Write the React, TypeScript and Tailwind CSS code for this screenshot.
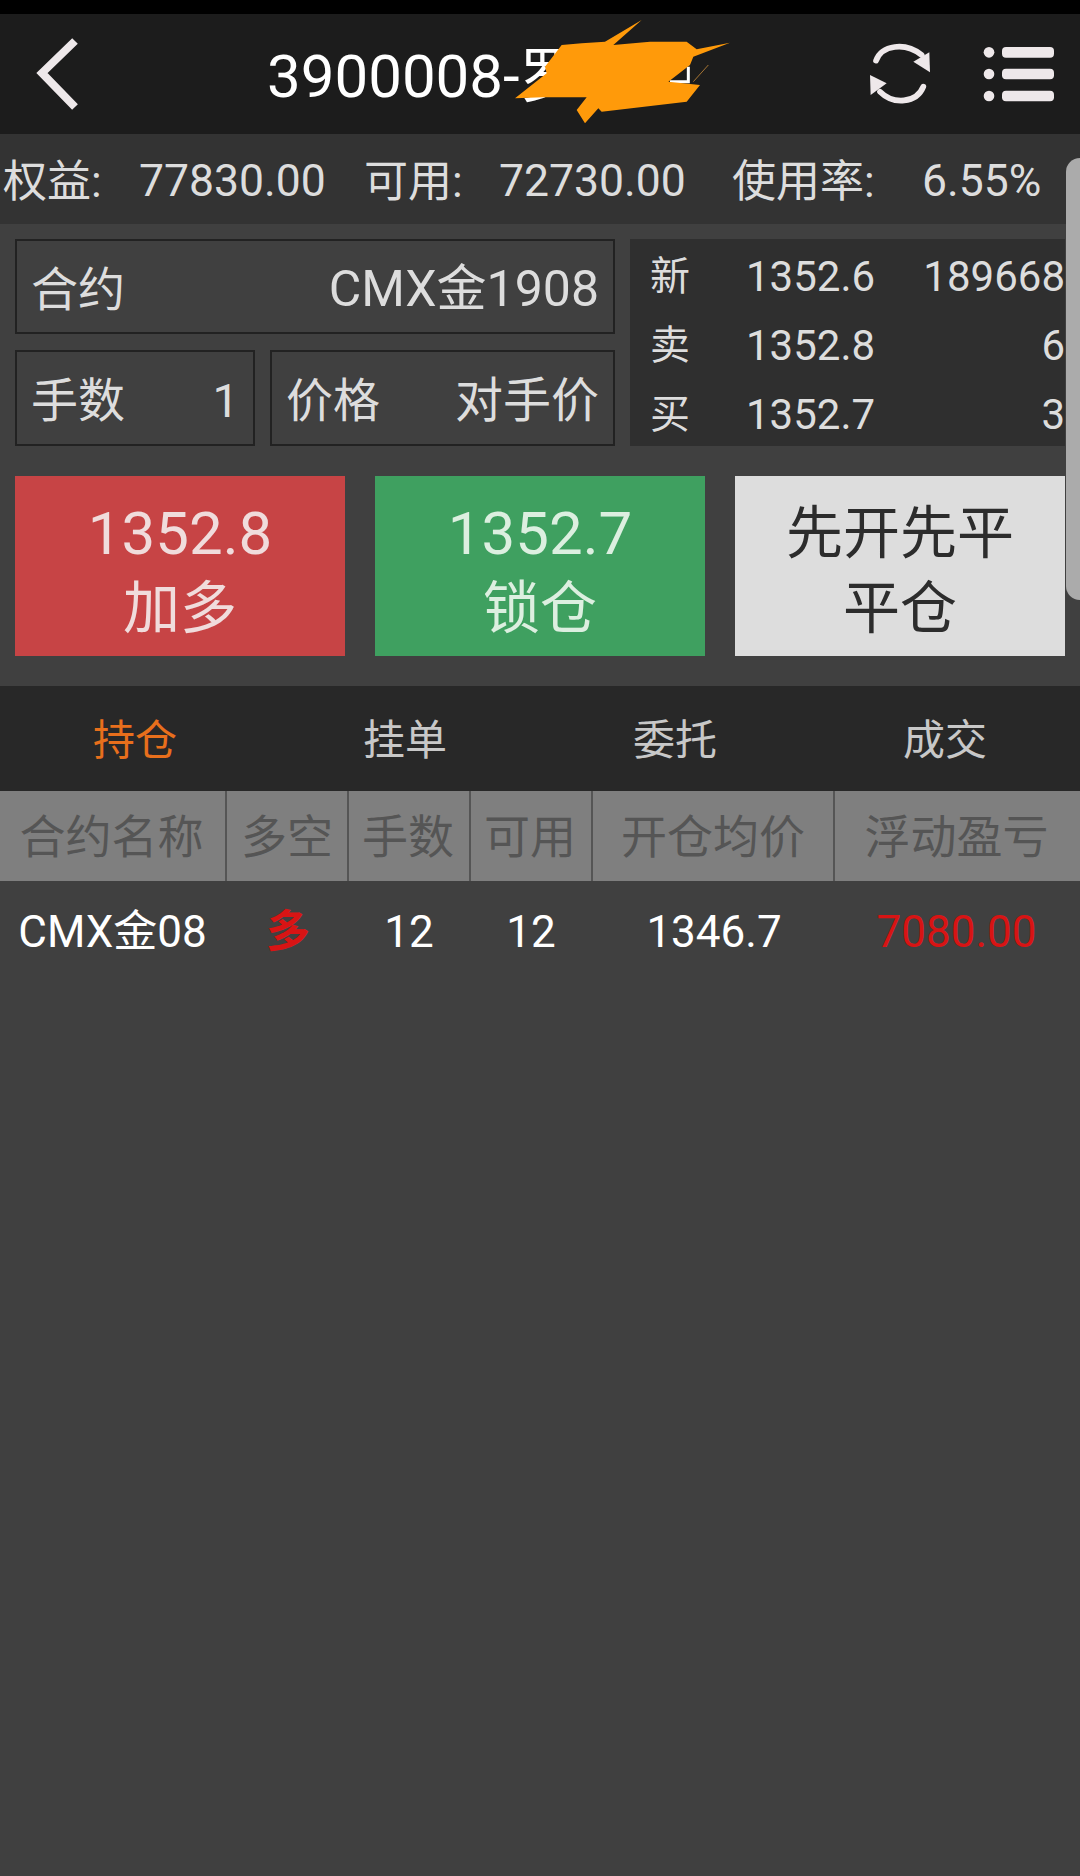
const font = { fontFamily: '"Roboto", "Noto Sans CJK SC", sans-serif' };

const quotes = [
  ["新", "1352.6", "189668"],
  ["卖", "1352.8", "6"],
  ["买", "1352.7", "3"],
];

const columns = [
  ["合约名称", "CMX金08", "w-[227px] pr-[2px]", "text-white"],
  ["多空", "多", "w-[122px]", "text-[#d81414] font-bold"],
  ["手数", "12", "w-[122px] pr-[2px]", "text-white"],
  ["可用", "12", "w-[122px] pr-[2px]", "text-white"],
  ["开仓均价", "1346.7", "w-[242px]", "text-white"],
  ["浮动盈亏", "7080.00", "w-[245px] pr-[2px]", "text-[#d81414]"],
];

function Header() {
  return (
    <header className="relative flex h-[120px] items-center bg-[#1c1c1c] pl-[36px] pr-[20px]">
      <svg width="44" height="72" viewBox="0 0 44 72" fill="none" className="shrink-0">
        <polyline points="39,3 6,35 39,69" stroke="#eee8ea" strokeWidth="8" />
      </svg>
      <h1 className="ml-[187px] pt-[5px] text-[60px] leading-none font-normal text-white">3900008-罗</h1>
      <svg
        width="780"
        height="375"
        viewBox="0 0 780 375"
        className="absolute left-[490px] top-[-4px] h-[125px] w-[260px]"
      >
        <path d="M540 215H595V170" stroke="#fff" strokeWidth="9" fill="none" />
        <line x1="610" y1="215" x2="655" y2="165" stroke="#e8a040" strokeWidth="2" />
        <polygon
          fill="#ff9a0a"
          points="455,30 345,95 275,100 215,105 165,170 170,190 75,265 160,262 290,262 260,300 285,340 325,295 335,305 590,275 630,225 535,215 600,165 610,140 720,98 620,118 590,95 480,95 370,105"
        />
      </svg>
      <svg width="90" height="80" viewBox="30 30 270 240" className="ml-auto -mt-[8px] shrink-0">
        <path d="M78 122C95 75 165 65 215 105" stroke="#eee8ea" strokeWidth="17" fill="none" strokeLinecap="round" />
        <polygon points="190,125 240,157 238,97" fill="#eee8ea" />
        <path d="M220 200C200 250 130 255 90 215" stroke="#eee8ea" strokeWidth="17" fill="none" strokeLinecap="round" />
        <polygon points="60,165 110,190 62,225" fill="#eee8ea" />
      </svg>
      <svg width="80" height="80" viewBox="390 30 240 240" className="ml-[30px] -mt-[8px] shrink-0">
        <circle cx="417" cy="97" r="16" fill="#eee8ea" />
        <circle cx="417" cy="162" r="16" fill="#eee8ea" />
        <circle cx="417" cy="228" r="16" fill="#eee8ea" />
        <rect x="456" y="81" width="156" height="32" rx="12" fill="#eee8ea" />
        <rect x="456" y="146" width="156" height="32" rx="12" fill="#eee8ea" />
        <rect x="456" y="212" width="156" height="32" rx="12" fill="#eee8ea" />
      </svg>
    </header>
  );
}

function Stats() {
  return (
    <div className="flex h-[90px] items-center whitespace-nowrap bg-[#333333] pl-[3px] pt-[5px] text-[44px] leading-none text-[#dddddd]">
      <span className="w-[136px]">权益:</span>
      <span className="w-[225px] text-[44.5px]">77830.00</span>
      <span className="w-[135px]">可用:</span>
      <span className="w-[233px] text-[44.5px]">72730.00</span>
      <span className="w-[190px]">使用率:</span>
      <span className="text-[44.5px]">6.55%</span>
    </div>
  );
}

function Field({
  label,
  value,
  valueSize,
  className,
}: {
  label: string;
  value: string;
  valueSize: string;
  className: string;
}) {
  return (
    <div
      className={`flex items-center justify-between border-2 border-[#222222] bg-[#404040] px-[14px] pt-[5px] text-[#dddddd] ${className}`}
    >
      <span className="text-[47px] leading-none">{label}</span>
      <span className={`leading-none ${valueSize}`}>{value}</span>
    </div>
  );
}

function OrderForm() {
  return (
    <div className="flex pl-[15px] pt-[15px]">
      <div className="flex w-[600px] flex-col gap-[16px]">
        <Field label="合约" value="CMX金1908" valueSize="text-[50px]" className="h-[95px]" />
        <div className="flex gap-[15px]">
          <Field label="手数" value="1" valueSize="text-[47px]" className="h-[96px] w-[240px]" />
          <Field label="价格" value="对手价" valueSize="text-[48px]" className="h-[96px] flex-1" />
        </div>
      </div>
      <div className="ml-[15px] flex h-[207px] w-[435px] flex-col justify-center gap-[27px] bg-[#2f2f2f] pl-[20px] pt-[6px] text-[#dddddd]">
        {quotes.map(([side, price, volume]) => (
          <div key={side} className="flex h-[42px] items-center leading-none">
            <span className="w-[96px] text-[40px]">{side}</span>
            <span className="text-[42px]">{price}</span>
            <span className="ml-auto text-[42px]">{volume}</span>
          </div>
        ))}
      </div>
    </div>
  );
}

function TradeButton({
  top,
  bottom,
  topSize,
  className,
}: {
  top: string;
  bottom: string;
  topSize: string;
  className: string;
}) {
  return (
    <button
      type="button"
      className={`flex h-[180px] w-[330px] flex-col items-center justify-center pt-[10px] leading-[75px] ${className}`}
    >
      <span className={topSize}>{top}</span>
      <span>{bottom}</span>
    </button>
  );
}

function Tabs() {
  return (
    <div className="grid h-[105px] grid-cols-4 items-center bg-[#282828] pt-[5px] text-center text-[42px] leading-none text-[#c8c8c8]">
      <span className="text-[#e86f1c]">持仓</span>
      <span>挂单</span>
      <span>委托</span>
      <span>成交</span>
    </div>
  );
}

function Positions() {
  return (
    <div>
      <div className="flex h-[90px] bg-[#7f7f7f] text-[#555555]">
        {columns.map(([title, , width]) => (
          <div
            key={title}
            className={`flex items-center justify-center border-r-2 border-[#555555] pt-[2px] text-[46px] leading-none last:border-r-0 ${width}`}
          >
            {title}
          </div>
        ))}
      </div>
      <div className="flex h-[102px]">
        {columns.map(([title, cell, width, color]) => (
          <div key={title} className={`flex items-center justify-center text-[44px] leading-none ${width} ${color}`}>
            {cell}
          </div>
        ))}
      </div>
    </div>
  );
}

export default function App() {
  return (
    <div className="relative h-[1876px] w-[1080px] overflow-hidden bg-[#404040]" style={font}>
      <div className="h-[14px] bg-black" />
      <Header />
      <Stats />
      <OrderForm />
      <div className="flex gap-[30px] pl-[15px] pt-[30px] text-[57px]">
        <TradeButton top="1352.8" bottom="加多" topSize="text-[60px]" className="bg-[#c74445] text-[#f0dcdc]" />
        <TradeButton top="1352.7" bottom="锁仓" topSize="text-[60px]" className="bg-[#3fa060] text-[#dcefe0]" />
        <TradeButton top="先开先平" bottom="平仓" topSize="text-[57px]" className="bg-[#dddddd] text-[#2c2c2c]" />
      </div>
      <div className="h-[30px]" />
      <Tabs />
      <Positions />
      <div className="absolute right-0 top-[158px] h-[442px] w-[14px] rounded-l-[14px] bg-[#ababab]" />
    </div>
  );
}
